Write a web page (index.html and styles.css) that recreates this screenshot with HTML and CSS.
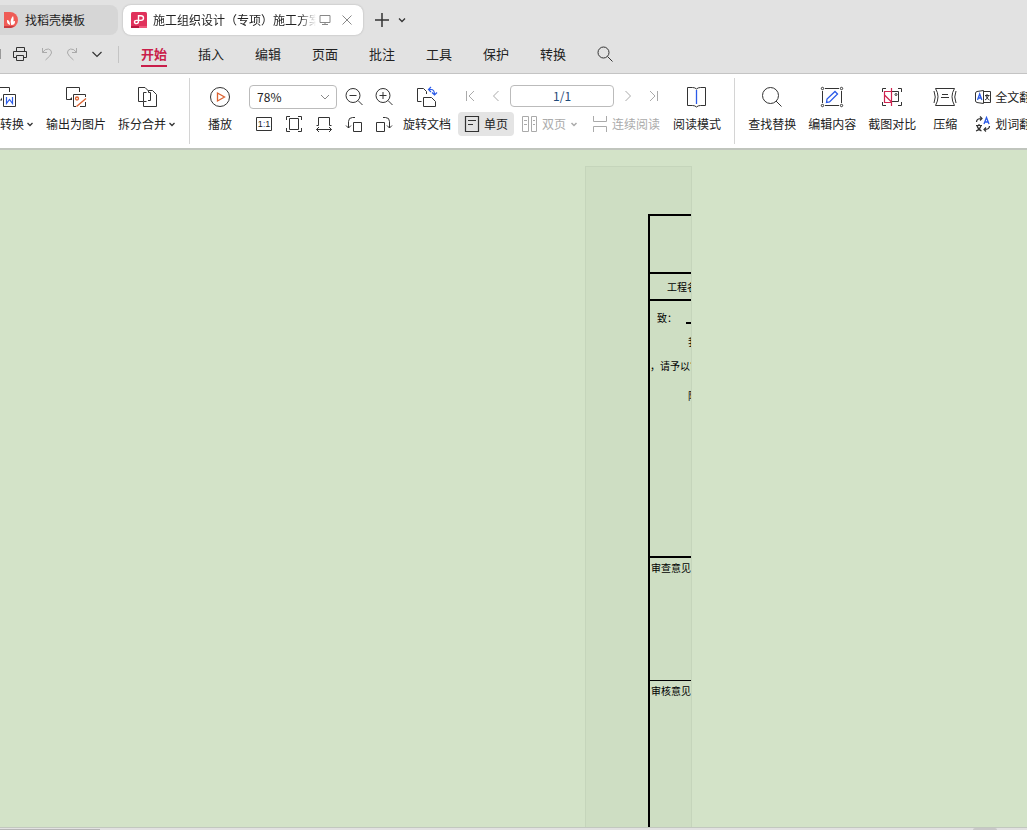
FILE: index.html
```html
<!DOCTYPE html>
<html lang="zh-CN">
<head>
<meta charset="utf-8">
<title>施工组织设计（专项）施工方案</title>
<link rel="stylesheet" href="styles.css">
</head>
<body>
<header class="tabs">
  <button class="tab">
    <svg width="14" height="16" viewBox="0 0 14 16"><path d="M0 0h6a8 8 0 0 1 0 16H0z" fill="#ef5c56"/><path d="M0 14h11l-4 2H0z" fill="#c93c40"/><path d="M6 13c-3-1-3-3-3-5 2 0 3 2 3 5zm1-1c-1-3 0-6 2-8 1 3 1 6-2 8zm0 1c0-3 2-4 4-4 0 3-1 4-4 4z" fill="#fff"/></svg>
    <span>找稻壳模板</span>
  </button>
  <div class="tab active">
    <svg width="16" height="16" viewBox="0 0 16 16"><rect width="16" height="16" rx="1.5" fill="#e0315b"/><path d="M0 14h8v2H0z" fill="#b9163f"/><path d="M8 14h8v2H8z" fill="#f0567a"/><path d="M7.500 9V3.800H10q2.500 0 2.500 2.300T10 8.400H5.500q-2 0-2 1.600t2 1.600q2 0 2-2.600" fill="none" stroke="#fff" stroke-width="1.400"/></svg>
    <span class="tab-title">施工组织设计（专项）施工方案</span>
    <svg class="ico muted" width="12" height="12" viewBox="0 0 12 12"><path d="M1 1.500h10v7H1zM6 8.500v2M3 10.500h6"/></svg>
    <button class="plain" aria-label="关闭"><svg class="ico muted" width="12" height="12" viewBox="0 0 12 12"><path d="M1.500 1.500l9 9M10.500 1.500l-9 9"/></svg></button>
  </div>
  <button class="plain new" aria-label="新建"><svg class="ico" width="14" height="14" viewBox="0 0 14 14"><path d="M7 0v14M0 7h14" stroke-width="1.500"/></svg></button>
  <button class="plain" aria-label="标签列表"><svg class="ico" width="8" height="8" viewBox="0 0 8 8"><path d="M1 2.500l3 3 3-3" stroke-width="1.300"/></svg></button>
</header>

<nav class="menu">
  <span class="edge"></span>
  <button class="plain" aria-label="打印"><svg class="ico" width="16" height="16" viewBox="0 0 16 16"><path d="M4.500 5V1.500h8V5M4 11.500H1.500v-6h13v6H12M4.500 9.500h7v5h-7z"/></svg></button>
  <button class="plain" aria-label="撤销" disabled><svg class="ico faint" width="12" height="14" viewBox="0 0 12 14"><path d="M1.500 1v4.500H6M1.500 5.500Q4 1.500 7.500 2 11 3 10.500 6 10 8.500 4.500 13"/></svg></button>
  <button class="plain" aria-label="恢复" disabled><svg class="ico faint" width="12" height="14" viewBox="0 0 12 14"><path d="M10.500 1v4.500H6M10.500 5.500Q8 1.500 4.500 2 1 3 1.500 6 2 8.500 7.500 13"/></svg></button>
  <button class="plain" aria-label="更多"><svg class="ico" width="12" height="8" viewBox="0 0 12 8"><path d="M1.500 2L6 6.500 10.500 2" stroke-width="1.200"/></svg></button>
  <span class="menu-rule"></span>
  <div class="menu-items">
    <a href="#" class="current">开始</a><a href="#">插入</a><a href="#">编辑</a><a href="#">页面</a><a href="#">批注</a><a href="#">工具</a><a href="#">保护</a><a href="#">转换</a>
    <button class="plain" aria-label="搜索"><svg class="ico" width="16" height="16" viewBox="0 0 16 16"><circle cx="6.500" cy="6.500" r="5.500"/><path d="M10.500 10.500l5 5"/></svg></button>
  </div>
</nav>

<section class="ribbon">
  <div class="group convert">
    <button class="tool start"><svg class="ico" width="24" height="24" viewBox="0 0 24 24"><path d="M0 2.500h9.500V7M3.500 9.500h12v12h-12z"/><path d="M0 15.500h2v-3z" fill="#333" stroke="none"/><path d="M6.500 12v6.500l3-4 3 4V12" stroke="#2b5be8" stroke-width="1.200"/></svg><span class="label">转换<svg class="ico" width="8" height="8" viewBox="0 0 8 8"><path d="M1.500 3L4 5.500 6.500 3" stroke-width="1.300"/></svg></span></button>
    <button class="tool"><svg class="ico" width="24" height="24" viewBox="0 0 24 24"><path d="M15.500 7V2.500h-13v12H6M21.500 12V9.500h-12v12H12M16 21.500h5.500V17"/><path d="M5 15h3v-3z" fill="#333" stroke="none"/><g stroke="#dc6230" stroke-width="1.300"><circle cx="13" cy="13.500" r="1.500"/><path d="M12.500 21.500L22 13.500"/></g></svg><span class="label">输出为图片</span></button>
    <button class="tool"><svg class="ico" width="24" height="24" viewBox="0 0 24 24"><path d="M8 16.500H3.500v-14H10l3.500 3.500M11.500 16.500h-3v-9h3M13.500 5.500h4l4 4v12h-13v-5M13.500 5.500v2h2v8h-2.500"/></svg><span class="label">拆分合并<svg class="ico" width="8" height="8" viewBox="0 0 8 8"><path d="M1.500 3L4 5.500 6.500 3" stroke-width="1.300"/></svg></span></button>
  </div>
  <div class="group view">
    <button class="tool"><svg class="ico" width="24" height="24" viewBox="0 0 24 24"><circle cx="12" cy="12" r="9.500"/><path d="M9.500 8v8l7-4z" stroke="#dc6230" stroke-width="1.300"/></svg><span class="label">播放</span></button>
    <div class="rows zoom">
      <div class="row">
        <div class="combo"><select aria-label="缩放比例"><option>78%</option></select><svg class="ico muted" width="10" height="8" viewBox="0 0 10 8"><path d="M1 2l4 4 4-4"/></svg></div>
        <button class="plain" aria-label="缩小"><svg class="ico" width="24" height="24" viewBox="0 0 24 24"><circle cx="11" cy="10.500" r="7"/><path d="M16 15.500l4.500 4.500M7.500 10.500h7"/></svg></button>
        <button class="plain" aria-label="放大"><svg class="ico" width="24" height="24" viewBox="0 0 24 24"><circle cx="11" cy="10.500" r="7"/><path d="M16 15.500l4.500 4.500M7.500 10.500h7M11 7v7"/></svg></button>
      </div>
      <div class="row fit">
        <button class="plain" aria-label="实际大小"><svg class="ico" width="24" height="24" viewBox="0 0 24 24"><path d="M4.500 5.500h15v13h-15z"/><text class="ratio" x="12" y="15" text-anchor="middle">1<tspan class="colon">:</tspan>1</text></svg></button>
        <button class="plain" aria-label="适合页面"><svg class="ico" width="24" height="24" viewBox="0 0 24 24"><path d="M7.500 6.500h9v11h-9zM4.500 8V4.500H8M16 4.500h3.500V8M4.500 16v3.500H8M16 19.500h3.500V16"/></svg></button>
        <button class="plain" aria-label="适合宽度"><svg class="ico" width="24" height="24" viewBox="0 0 24 24"><path d="M4.500 13.500h2v-8h11v8h2M4.500 17.500h15M7 15l-2.500 2.500L7 20M17 15l2.500 2.500L17 20"/></svg></button>
        <button class="plain" aria-label="向左旋转"><svg class="ico" width="24" height="24" viewBox="0 0 24 24"><path d="M11.500 10.500h8v9h-8zM13 5.500h-2.500q-4 0-4 4V16M4 13.500L6.500 16 9 13.500"/></svg></button>
        <button class="plain" aria-label="向右旋转"><svg class="ico" width="24" height="24" viewBox="0 0 24 24"><path d="M4.500 10.500h8v9h-8zM11 5.500h2.500q4 0 4 4V16M15 13.500l2.500 2.500 2.500-2.500"/></svg></button>
      </div>
    </div>
    <button class="tool"><svg class="ico" width="24" height="24" viewBox="0 0 24 24"><path d="M6.500 16.500h-4v-13h6l3 3V9M8.500 21.500v-9h8l4 4v5z"/><path d="M14 4.500h2q3.500 0 3.500 5M16 2l-2.500 2.500L16 7M17 7.500l2.500 2.500L22 7.500" stroke="#2b5be8" stroke-width="1.200"/></svg><span class="label">旋转文档</span></button>
    <div class="rows pages">
      <div class="row nav">
        <button class="plain" aria-label="第一页"><svg class="ico faint" width="12" height="12" viewBox="0 0 12 12"><path d="M2.500 1v10M10 1L5 6l5 5"/></svg></button>
        <button class="plain" aria-label="上一页"><svg class="ico faint" width="12" height="12" viewBox="0 0 12 12"><path d="M8.500 1l-5 5 5 5"/></svg></button>
        <input type="text" value="1/1" aria-label="页码">
        <button class="plain" aria-label="下一页"><svg class="ico faint" width="12" height="12" viewBox="0 0 12 12"><path d="M3.500 1l5 5-5 5"/></svg></button>
        <button class="plain" aria-label="最后一页"><svg class="ico faint" width="12" height="12" viewBox="0 0 12 12"><path d="M9.500 1v10M2 1l5 5-5 5"/></svg></button>
      </div>
      <div class="row modes">
        <button class="mode on"><svg class="ico" width="16" height="18" viewBox="0 0 16 18"><path d="M1.500 1.500h13v15h-13zM4 5.500h8M4 9.500h5" stroke-width="1.200"/></svg>单页</button>
        <button class="mode" disabled><svg class="ico faint" width="16" height="18" viewBox="0 0 16 18"><path d="M.5 1.500h6v15h-6zM9.500 1.500h5v15h-5zM2 5.500h3M2 9.500h3M11 5.500h2M11 9.500h2"/></svg>双页<svg class="ico faint" width="8" height="8" viewBox="0 0 8 8"><path d="M1.500 3L4 5.500 6.500 3" stroke-width="1.500"/></svg></button>
        <button class="mode" disabled><svg class="ico faint" width="16" height="18" viewBox="0 0 16 18"><path d="M1.500 1v5.500h13V1M1.500 17v-5.500h13V17"/></svg>连续阅读</button>
      </div>
    </div>
    <button class="tool"><svg class="ico" width="24" height="24" viewBox="0 0 24 24"><path d="M11.500 4q-1.500-1.500-4-1.500h-5v18h5q2.500 0 4 1.500 1.500-1.500 4-1.500h5v-18h-5q-2.500 0-4 1.500"/><path d="M11.500 5v14" stroke="#2b5be8" stroke-width="1.300"/></svg><span class="label">阅读模式</span></button>
  </div>
  <div class="group edit">
    <button class="tool"><svg class="ico" width="24" height="24" viewBox="0 0 24 24"><circle cx="10.500" cy="10.500" r="8"/><path d="M16 16l5.500 5.500"/></svg><span class="label">查找替换</span></button>
    <button class="tool"><svg class="ico" width="24" height="24" viewBox="0 0 24 24"><path d="M5 3.500h14M5 20.500h14M2.500 6v12M21.500 6v12"/><g fill="#fff"><circle cx="2.500" cy="3.500" r="1.200"/><circle cx="21.500" cy="3.500" r="1.200"/><circle cx="2.500" cy="20.500" r="1.200"/><circle cx="21.500" cy="20.500" r="1.200"/></g><path d="M6.500 17.500l.5-3.500 8-7.500 2.500 2.500-8 8z" stroke="#2b5be8" stroke-width="1.300"/></svg><span class="label">编辑内容</span></button>
    <button class="tool"><svg class="ico" width="24" height="24" viewBox="0 0 24 24"><path d="M6 3.500H2.500V7M18 3.500h3.500V7M6 20.500H2.500V17M18 20.500h3.500V17M12 6.500h6.500v10H12"/><circle cx="16" cy="9.500" r="1"/><path d="M11.500 6.500h-7v11h7M11.500 3v18M4.500 10l7 7" stroke="#cf2450" stroke-width="1.200"/></svg><span class="label">截图对比</span></button>
    <button class="tool"><svg class="ico" width="24" height="24" viewBox="0 0 24 24"><path d="M2.500 3.500h19M2.500 20.500h19M2.500 3.500q5 8 0 17M21.500 3.500q-5 8 0 17M9 9.500h6M8 12.500h8M1 6q2.500 6 0 12M23 6q-2.500 6 0 12"/></svg><span class="label">压缩</span></button>
    <div class="rows translate">
      <button class="mode"><svg class="ico" width="16" height="16" viewBox="0 0 16 16"><path d="M8.500 1.500L2 2.500Q.5 3 .5 4v8q0 1 1.500 1.500l6.500 1zM8.500 2.500h7v11h-7M10 6.500h4.500M12 5v1.500M13.500 6.500q-1 3.500-3.500 4.500M11 7q1 3 3.500 4"/><path d="M2.500 11l2.200-6 2.200 6M3.300 9h3" stroke="#2b5be8" stroke-width="1.300"/></svg>全文翻译</button>
      <button class="mode"><svg class="ico" width="16" height="16" viewBox="0 0 16 16"><path d="M1.500 6q0-3.500 5-3.500M5 .5l2 2-2 2M14.500 10q0 3.500-5 3.500M11 11.500l-2 2 2 2M1 9.500h6M4 8v1.500M6 9.500q-1 4-5 5.500M2 9.500q1 4 4.500 5.500" stroke-width="1.200"/><path d="M9 8l2.500-6.500L14 8M10 6h3" stroke="#2b5be8" stroke-width="1.300"/></svg>划词翻译</button>
    </div>
  </div>
</section>

<main class="canvas">
  <article class="sheet">
    <table class="form">
      <tr class="heading"><td></td></tr>
      <tr class="project"><td>工程名称</td></tr>
      <tr class="request"><td>
        <p class="to">致：<span class="blank"></span></p>
        <p class="indent">我方</p>
        <p class="reply">，请予以审查</p>
        <p class="indent">附件</p>
      </td></tr>
      <tr class="review"><td>审查意见</td></tr>
      <tr class="approve"><td>审核意见</td></tr>
    </table>
  </article>
</main>
<footer class="status"><span class="bar"></span><span class="thumb"></span></footer>
</body>
</html>
```

FILE: styles.css
```css
* { box-sizing: border-box; }
body {
  margin: 0;
  height: 100vh;
  display: flex;
  flex-direction: column;
  overflow: hidden;
  background: #e2e2e2;
  color: #222;
  font: 12px/16px "Noto Sans CJK SC", sans-serif;
}
button { font: inherit; color: inherit; border: 0; padding: 0; background: none; white-space: nowrap; }
svg { display: block; flex: none; }
.ico { fill: none; stroke: #333; stroke-width: 1; }
.muted { stroke: #888; }
.faint { stroke: #aaa; }
.plain { display: flex; align-items: center; justify-content: center; flex: none; }

.tabs { display: flex; align-items: center; height: 40px; flex: none; }
.tab { display: flex; align-items: center; height: 30px; border-radius: 0 8px 8px 0; background: #d6d6d6; width: 118px; padding-left: 4px; gap: 7px; white-space: nowrap; }
.tab.active { width: 240px; margin-left: 5px; padding: 0 10px 0 8px; gap: 6px; border-radius: 8px; background: #fff; box-shadow: 0 0 2px #aaa; }
.tab-title { flex: 1; overflow: hidden; margin-right: -3px; mask-image: linear-gradient(to right, #000 90%, transparent); }
.tab.active .plain { margin-left: 4px; }
.new { margin: 0 9px 0 12px; }

.menu { display: flex; align-items: center; height: 34px; flex: none; border-bottom: 1px solid #c4c4c4; padding-bottom: 5px; }
.edge { width: 1px; height: 10px; margin-right: 11px; background: #999; }
.menu .plain + .plain { margin-left: 13px; }
.menu-rule { width: 1px; height: 17px; margin: 0 22px 0 15px; background: #c4c4c4; }
.menu-items { display: flex; align-items: center; gap: 31px; font-size: 13px; line-height: 20px; }
.menu-items a { color: #222; text-decoration: none; border-bottom: 2px solid transparent; padding: 3px 0 1px; white-space: nowrap; }
.menu-items .current { color: #c91e4a; font-weight: 700; border-color: #c91e4a; }

.ribbon { display: flex; height: 76px; flex: none; padding: 4px 0; background: #fff; border-bottom: 2px solid #c0c5bd; }
.group { display: flex; align-items: flex-start; flex: none; padding-top: 7px; height: 66px; }
.group + .group { border-left: 1px solid #d4d4d4; }
.tool { display: flex; flex-direction: column; align-items: center; gap: 7px; flex: none; }
.tool.start { align-items: flex-start; }
.label { display: flex; align-items: center; gap: 2px; }
.convert { gap: 12px; padding-right: 13px; }
.view { padding-left: 18px; padding-right: 13px; }
.edit { padding-left: 13px; gap: 12px; }
.edit .translate { margin-left: 6px; }
.edit .tool:nth-child(4) { margin-left: 5px; }
.rows { display: flex; flex-direction: column; gap: 3px; }
.row { display: flex; align-items: center; height: 24px; }
.zoom { margin: 0 7px 0 17px; }
.zoom .row { gap: 6px; }
.fit { padding-left: 3px; }
.ratio { font: 9px "Liberation Sans", sans-serif; fill: #222; stroke: none; }
.colon { fill: #2b5be8; }
.combo { display: grid; align-items: center; width: 88px; margin-right: -1px; }
.combo select { grid-area: 1 / 1; appearance: none; width: 100%; height: 24px; border: 1px solid #bbb; border-radius: 4px; background: #fff; color: #222; font: inherit; padding: 0 7px 1px; }
.combo svg { grid-area: 1 / 1; justify-self: end; margin-right: 7px; pointer-events: none; }
.pages { margin: 0 13px 0 7px; }
.nav { gap: 14px; padding: 0 0 2px 6px; }
.nav input { width: 104px; height: 22px; margin: 0 -6px; border: 1px solid #bbb; border-radius: 4px; background: #fff; color: #1f4a78; font: inherit; text-align: center; padding: 0 0 2px; }
.mode { display: flex; align-items: center; gap: 4px; height: 24px; }
.modes .mode:disabled { color: #aaa; }
.mode.on { width: 56px; padding-left: 6px; background: #e4e4e4; border-radius: 4px; margin-right: 8px; }
.modes .mode:last-child { margin-left: 14px; }

.canvas { flex: 1; min-height: 0; display: flex; padding: 16px 0 0 585px; background: #d3e3c8; overflow: hidden; }
.sheet { width: 107px; padding: 47px 0 0 62px; border: 1px solid #c5d5bb; border-bottom: 0; background: #cedec3; overflow: hidden; }
.form { border-collapse: separate; border-spacing: 0; table-layout: fixed; width: 160px; border-left: 2px solid #000; color: #000; font-size: 10px; line-height: 12px; }
.form td { border-top: 2px solid #000; padding: 0; vertical-align: top; white-space: nowrap; }
.form p { margin: 0; }
.form .heading td { height: 58px; }
.form .project td { height: 27px; padding: 7px 0 0 17px; }
.form .request td { height: 257px; padding-top: 11px; }
.to { display: flex; padding-left: 7px; }
.blank { width: 60px; height: 12px; margin-left: 9px; border-bottom: 2px solid #000; }
.form .indent { padding-left: 38px; margin-top: 12px; }
.form .reply { margin-top: 12px; }
.form .reply + .indent { margin-top: 18px; }
.form .review td { height: 124px; padding: 4px 0 0 1px; }
.form .approve td { height: 300px; padding: 4px 0 0 1px; border-top-width: 1px; }

.status { display: flex; justify-content: space-between; align-items: flex-end; height: 3px; flex: none; border-top: 1px solid #c2c8bf; background: #e2e2e2; padding-right: 30px; }
.bar { width: 100px; height: 1px; background: #b5b5b5; }
.thumb { width: 24px; height: 2px; background: #c8c8c8; border-radius: 4px 4px 0 0; }
```
